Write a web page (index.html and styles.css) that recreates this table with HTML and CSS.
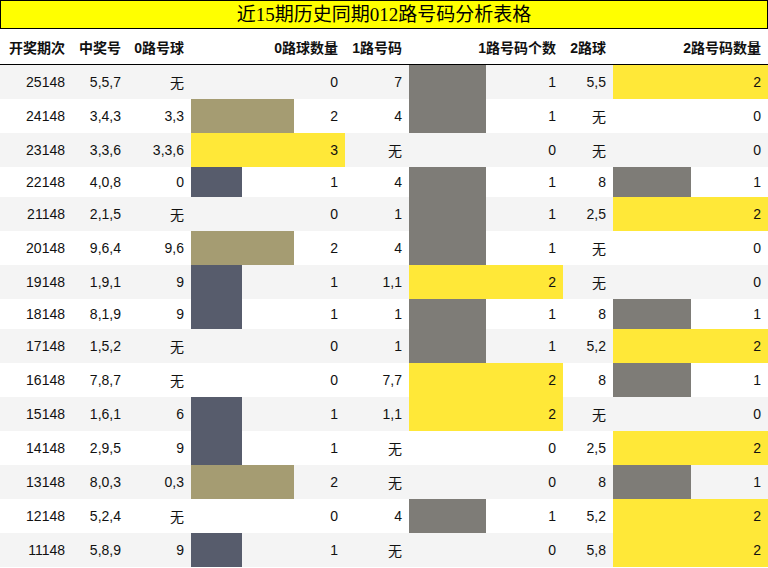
FILE: index.html
```html
<!DOCTYPE html>
<html lang="zh">
<head>
<meta charset="utf-8">
<title>近15期历史同期012路号码分析表格</title>
<link rel="stylesheet" href="styles.css">
</head>
<body>
<div class="title">近15期历史同期012路号码分析表格</div>
<table class="grid">
<colgroup>
<col class="c1"><col class="c2"><col class="c3"><col class="c4"><col class="c5"><col class="c6"><col class="c7"><col class="c8">
</colgroup>
<thead>
<tr><th>开奖期次</th><th>中奖号</th><th>0路号球</th><th>0路球数量</th><th>1路号码</th><th>1路号码个数</th><th>2路球</th><th>2路号码数量</th></tr>
</thead>
<tbody>
<tr><td>25148</td><td>5,5,7</td><td>无</td><td>0</td><td>7</td><td class="bar g" style="--w:50%">1</td><td>5,5</td><td class="bar y" style="--w:100%">2</td></tr>
<tr><td>24148</td><td>3,4,3</td><td>3,3</td><td class="bar t" style="--w:66.7%">2</td><td>4</td><td class="bar g" style="--w:50%">1</td><td>无</td><td>0</td></tr>
<tr><td>23148</td><td>3,3,6</td><td>3,3,6</td><td class="bar y" style="--w:100%">3</td><td>无</td><td>0</td><td>无</td><td>0</td></tr>
<tr><td>22148</td><td>4,0,8</td><td>0</td><td class="bar s" style="--w:33.3%">1</td><td>4</td><td class="bar g" style="--w:50%">1</td><td>8</td><td class="bar g" style="--w:50%">1</td></tr>
<tr><td>21148</td><td>2,1,5</td><td>无</td><td>0</td><td>1</td><td class="bar g" style="--w:50%">1</td><td>2,5</td><td class="bar y" style="--w:100%">2</td></tr>
<tr><td>20148</td><td>9,6,4</td><td>9,6</td><td class="bar t" style="--w:66.7%">2</td><td>4</td><td class="bar g" style="--w:50%">1</td><td>无</td><td>0</td></tr>
<tr><td>19148</td><td>1,9,1</td><td>9</td><td class="bar s" style="--w:33.3%">1</td><td>1,1</td><td class="bar y" style="--w:100%">2</td><td>无</td><td>0</td></tr>
<tr><td>18148</td><td>8,1,9</td><td>9</td><td class="bar s" style="--w:33.3%">1</td><td>1</td><td class="bar g" style="--w:50%">1</td><td>8</td><td class="bar g" style="--w:50%">1</td></tr>
<tr><td>17148</td><td>1,5,2</td><td>无</td><td>0</td><td>1</td><td class="bar g" style="--w:50%">1</td><td>5,2</td><td class="bar y" style="--w:100%">2</td></tr>
<tr><td>16148</td><td>7,8,7</td><td>无</td><td>0</td><td>7,7</td><td class="bar y" style="--w:100%">2</td><td>8</td><td class="bar g" style="--w:50%">1</td></tr>
<tr><td>15148</td><td>1,6,1</td><td>6</td><td class="bar s" style="--w:33.3%">1</td><td>1,1</td><td class="bar y" style="--w:100%">2</td><td>无</td><td>0</td></tr>
<tr><td>14148</td><td>2,9,5</td><td>9</td><td class="bar s" style="--w:33.3%">1</td><td>无</td><td>0</td><td>2,5</td><td class="bar y" style="--w:100%">2</td></tr>
<tr><td>13148</td><td>8,0,3</td><td>0,3</td><td class="bar t" style="--w:66.7%">2</td><td>无</td><td>0</td><td>8</td><td class="bar g" style="--w:50%">1</td></tr>
<tr><td>12148</td><td>5,2,4</td><td>无</td><td>0</td><td>4</td><td class="bar g" style="--w:50%">1</td><td>5,2</td><td class="bar y" style="--w:100%">2</td></tr>
<tr><td>11148</td><td>5,8,9</td><td>9</td><td class="bar s" style="--w:33.3%">1</td><td>无</td><td>0</td><td>5,8</td><td class="bar y" style="--w:100%">2</td></tr>
</tbody>
</table>
</body>
</html>
```
FILE: styles.css
```css
html, body {
  margin: 0;
  padding: 0;
  background: #ffffff;
}

body {
  width: 768px;
  color: #111111;
  font-family: "Liberation Sans", "Noto Sans CJK SC", sans-serif;
  font-size: 14px;
}

.title {
  background: #ffff00;
  border: 1px solid #000000;
  text-align: center;
  font-family: "Liberation Serif", "Noto Sans CJK SC", serif;
  font-size: 19px;
  line-height: 27px;
  color: #000000;
}

.grid {
  width: 768px;
  border-collapse: collapse;
  table-layout: fixed;
}

.c1 { width: 72px; }
.c2 { width: 56px; }
.c3 { width: 63px; }
.c4 { width: 154px; }
.c5 { width: 64px; }
.c6 { width: 154px; }
.c7 { width: 50px; }
.c8 { width: 155px; }

.grid th,
.grid td {
  padding: 7px 7px 7px 0;
  text-align: right;
  white-space: nowrap;
}

.grid th {
  padding-top: 8px;
  font-weight: bold;
  color: #111111;
  border-bottom: 1px solid #000000;
}

.grid tbody tr:nth-child(odd) {
  background: #f4f4f4;
}

.grid tbody tr:nth-child(even) {
  background: #ffffff;
}

.bar {
  background-image: linear-gradient(to right, var(--c) 0, var(--c) var(--w), transparent var(--w));
}

.bar.s { --c: #575c6c; }
.bar.t { --c: #a59c72; }
.bar.y { --c: #ffe838; }
.bar.g { --c: #7e7c77; }
```
